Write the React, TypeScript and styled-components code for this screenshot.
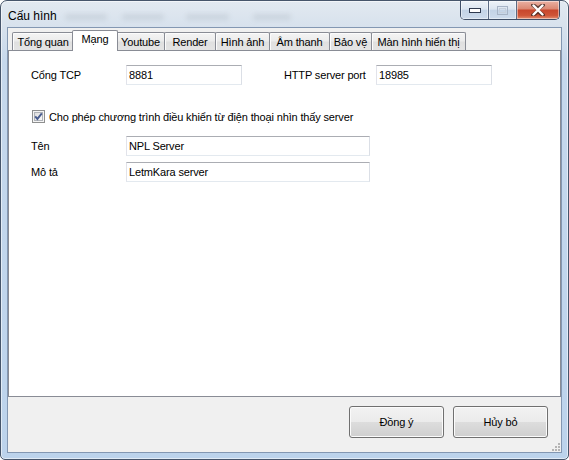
import React from "react";
import styled, { createGlobalStyle } from "styled-components";

const Global = createGlobalStyle`
  html, body { margin: 0; padding: 0; background: #ffffff; }
  body { font-family: "Liberation Sans", Arial, sans-serif; font-size: 11px; color: #000; }
  * { box-sizing: border-box; }
`;

const Window = styled.div`
  width: 569px;
  height: 460px;
  border: 1px solid #46556b;
  border-radius: 7px 7px 5px 5px;
  background: linear-gradient(180deg, #e2e9f1 0px, #d8e2ed 24px, #c6d8ec 60px, #bcd3ec 100%);
  box-shadow: inset 0 0 0 1px rgba(255, 255, 255, 0.55);
  display: flex;
  flex-direction: column;
  overflow: hidden;
`;

const TitleBar = styled.div`
  height: 27px;
  flex: none;
  display: flex;
  align-items: flex-start;
  padding: 0 7px 0 7px;
`;

const Title = styled.div`
  font-family: "Liberation Sans", Arial, sans-serif;
  font-size: 12px;
  line-height: 27px;
  padding-top: 2px;
  color: #000;
`;

const Blur = styled.div<{ $w: number; $ml: number }>`
  width: ${(p) => p.$w}px;
  margin-left: ${(p) => p.$ml}px;
  height: 6px;
  margin-top: 13px;
  border-radius: 3px;
  background: rgba(120, 130, 145, 0.16);
  filter: blur(2.5px);
`;

const Spacer = styled.div`
  flex: 1;
`;

const Controls = styled.div`
  display: flex;
  height: 19px;
  border: 1px solid #3f4e66;
  border-top: none;
  border-radius: 0 0 5px 5px;
  overflow: hidden;
  margin-right: 1px;
`;

const CtrlBtn = styled.div<{ $w: number; $close?: boolean }>`
  width: ${(p) => p.$w}px;
  height: 100%;
  display: flex;
  align-items: center;
  justify-content: center;
  & + & { border-left: 1px solid #5b6b84; }
  background: ${(p) =>
    p.$close
      ? "linear-gradient(180deg, #eab1a3 0%, #dc8a75 42%, #c8472d 52%, #cf5538 80%, #e38e70 100%)"
      : "linear-gradient(180deg, #eef3f8 0%, #dbe5f0 45%, #c3d3e6 52%, #cddbec 100%)"};
  box-shadow: inset 0 0 0 1px rgba(255, 255, 255, 0.45);
`;

const Client = styled.div`
  flex: 1;
  margin: 0 7px 7px 7px;
  background: #f0f0f0;
  outline: 1px solid #8397b2;
  display: flex;
  flex-direction: column;
  position: relative;
  letter-spacing: -0.15px;
`;

const TabStrip = styled.div`
  height: 22px;
  flex: none;
  display: flex;
  align-items: flex-end;
  padding-left: 4px;
`;

const Tab = styled.div<{ $w: number; $active?: boolean }>`
  position: relative;
  z-index: ${(p) => (p.$active ? 2 : 1)};
  flex: none;
  width: ${(p) => p.$w}px;
  height: ${(p) => (p.$active ? 21 : 18)}px;
  margin-left: ${(p) => (p.$active ? -2 : -1)}px;
  margin-right: ${(p) => (p.$active ? -1 : 0)}px;
  margin-bottom: ${(p) => (p.$active ? -1 : 0)}px;
  &:first-child { margin-left: 0; }
  border: 1px solid #898c95;
  border-bottom: none;
  border-radius: 2px 2px 0 0;
  background: ${(p) =>
    p.$active
      ? "#ffffff"
      : "linear-gradient(180deg, #f4f4f4 0%, #ececec 45%, #e0e0e0 55%, #e4e4e4 100%)"};
  box-shadow: ${(p) => (p.$active ? "none" : "inset 1px 1px 0 #fcfcfc")};
  display: flex;
  justify-content: center;
  align-items: ${(p) => (p.$active ? "flex-start" : "center")};
  padding-top: ${(p) => (p.$active ? 1 : 0)}px;
  font-size: 11px;
  line-height: 14px;
  white-space: nowrap;
`;

const Panel = styled.div`
  height: 347px;
  flex: none;
  border: 1px solid #898c95;
  background: #ffffff;
  padding: 14px 0 0 22px;
`;

const PortRow = styled.div`
  display: grid;
  grid-template-columns: 95px 116px 42px 92px 116px;
  align-items: center;
  height: 20px;
`;

const FieldRow = styled.div<{ $mt: number }>`
  display: grid;
  grid-template-columns: 95px 244px;
  align-items: center;
  height: 20px;
  margin-top: ${(p) => p.$mt}px;
`;

const Label = styled.span<{ $col?: number }>`
  grid-column: ${(p) => p.$col ?? "auto"};
  font-size: 11px;
  white-space: nowrap;
`;

const TextBox = styled.input<{ $col?: number }>`
  grid-column: ${(p) => p.$col ?? "auto"};
  width: 100%;
  min-width: 0;
  height: 20px;
  margin: 0;
  border: 1px solid;
  border-color: #abadb3 #dbdfe6 #e3e9ef #e2e3ea;
  border-radius: 0;
  padding: 0 2px;
  font-family: "Liberation Sans", Arial, sans-serif;
  font-size: 11px;
  letter-spacing: -0.15px;
  color: #000;
  background: #fff;
  outline: none;
`;

const CheckRow = styled.label`
  display: flex;
  align-items: center;
  gap: 4px;
  height: 13px;
  margin-top: 25px;
  padding-left: 1px;
  font-size: 11px;
  white-space: nowrap;
`;

const Footer = styled.div`
  flex: 1;
  display: flex;
  justify-content: flex-end;
  align-items: flex-start;
  gap: 9px;
  padding: 9px 13px 0 0;
`;

const Button = styled.button`
  width: 95px;
  height: 32px;
  margin: 0;
  padding: 0;
  border: 1px solid #707070;
  border-radius: 3px;
  background: linear-gradient(180deg, #f2f2f2 0%, #ebebeb 50%, #dddddd 50%, #cfcfcf 100%);
  box-shadow: inset 0 0 0 1px #fbfbfb;
  font-family: "Liberation Sans", Arial, sans-serif;
  font-size: 11px;
  letter-spacing: -0.15px;
  color: #000;
`;

const Grip = styled.svg`
  position: absolute;
  right: 1px;
  bottom: 1px;
`;

const tabs: { label: string; w: number; active?: boolean }[] = [
  { label: "Tổng quan", w: 62 },
  { label: "Mạng", w: 46, active: true },
  { label: "Youtube", w: 49 },
  { label: "Render", w: 52 },
  { label: "Hình ảnh", w: 55 },
  { label: "Âm thanh", w: 61 },
  { label: "Bảo vệ", w: 43 },
  { label: "Màn hình hiển thị", w: 95 },
];

const CheckBox = () => (
  <svg width="13" height="13" viewBox="0 0 13 13">
    <defs>
      <linearGradient id="cbg" x1="0" y1="0" x2="1" y2="1">
        <stop offset="0" stopColor="#dcdcdc" />
        <stop offset="1" stopColor="#fbfbfb" />
      </linearGradient>
    </defs>
    <rect x="0.5" y="0.5" width="12" height="12" fill="#f4f4f4" stroke="#8e8f8f" />
    <rect x="2.5" y="2.5" width="8" height="8" fill="url(#cbg)" stroke="#b0b3b8" />
    <path d="M3.2 6.3 L5.4 8.9 L9.8 3.4" fill="none" stroke="#4a5d8f" strokeWidth="1.9" />
  </svg>
);

export default function App() {
  return (
    <>
      <Global />
      <Window>
        <TitleBar>
          <Title>Cấu hình</Title>
          <Blur $w={42} $ml={8} />
          <Blur $w={42} $ml={15} />
          <Blur $w={43} $ml={22} />
          <Blur $w={38} $ml={24} />
          <Spacer />
          <Controls>
            <CtrlBtn $w={27}>
              <svg width="12" height="5" viewBox="0 0 12 5">
                <rect x="0.5" y="0.5" width="11" height="4" fill="#ffffff" stroke="#2f3a4f" />
              </svg>
            </CtrlBtn>
            <CtrlBtn $w={28}>
              <svg width="11" height="9" viewBox="0 0 11 9">
                <rect x="0.5" y="0.5" width="10" height="8" fill="none" stroke="#a7b4c6" />
                <rect x="2.5" y="2.5" width="6" height="4" fill="none" stroke="#c5cfdc" />
              </svg>
            </CtrlBtn>
            <CtrlBtn $w={43} $close>
              <svg width="14" height="12" viewBox="0 0 14 12">
                <path
                  d="M2 1 L7 4.6 L12 1 M2 11 L7 7.4 L12 11 M7 4.6 L7 7.4"
                  fill="none"
                  stroke="#3a2520"
                  strokeWidth="4"
                  strokeLinecap="round"
                  strokeLinejoin="round"
                  opacity="0.75"
                />
                <path
                  d="M2.5 1.5 L11.5 10.5 M11.5 1.5 L2.5 10.5"
                  fill="none"
                  stroke="#ffffff"
                  strokeWidth="2.4"
                  strokeLinecap="round"
                />
              </svg>
            </CtrlBtn>
          </Controls>
        </TitleBar>
        <Client>
          <TabStrip>
            {tabs.map((t) => (
              <Tab key={t.label} $w={t.w} $active={t.active}>
                {t.label}
              </Tab>
            ))}
          </TabStrip>
          <Panel>
            <PortRow>
              <Label>Cổng TCP</Label>
              <TextBox defaultValue="8881" />
              <Label $col={4}>HTTP server port</Label>
              <TextBox $col={5} defaultValue="18985" />
            </PortRow>
            <CheckRow>
              <CheckBox />
              <span>Cho phép chương trình điều khiển từ điện thoại nhìn thấy server</span>
            </CheckRow>
            <FieldRow $mt={13}>
              <Label>Tên</Label>
              <TextBox defaultValue="NPL Server" />
            </FieldRow>
            <FieldRow $mt={6}>
              <Label>Mô tả</Label>
              <TextBox defaultValue="LetmKara server" />
            </FieldRow>
          </Panel>
          <Footer>
            <Button>Đồng ý</Button>
            <Button>Hủy bỏ</Button>
          </Footer>
          <Grip width="8" height="8" viewBox="0 0 8 8">
            <g fill="#b4b4b4">
              <rect x="6" y="0" width="2" height="2" />
              <rect x="3" y="3" width="2" height="2" />
              <rect x="6" y="3" width="2" height="2" />
              <rect x="0" y="6" width="2" height="2" />
              <rect x="3" y="6" width="2" height="2" />
              <rect x="6" y="6" width="2" height="2" />
            </g>
          </Grip>
        </Client>
      </Window>
    </>
  );
}
